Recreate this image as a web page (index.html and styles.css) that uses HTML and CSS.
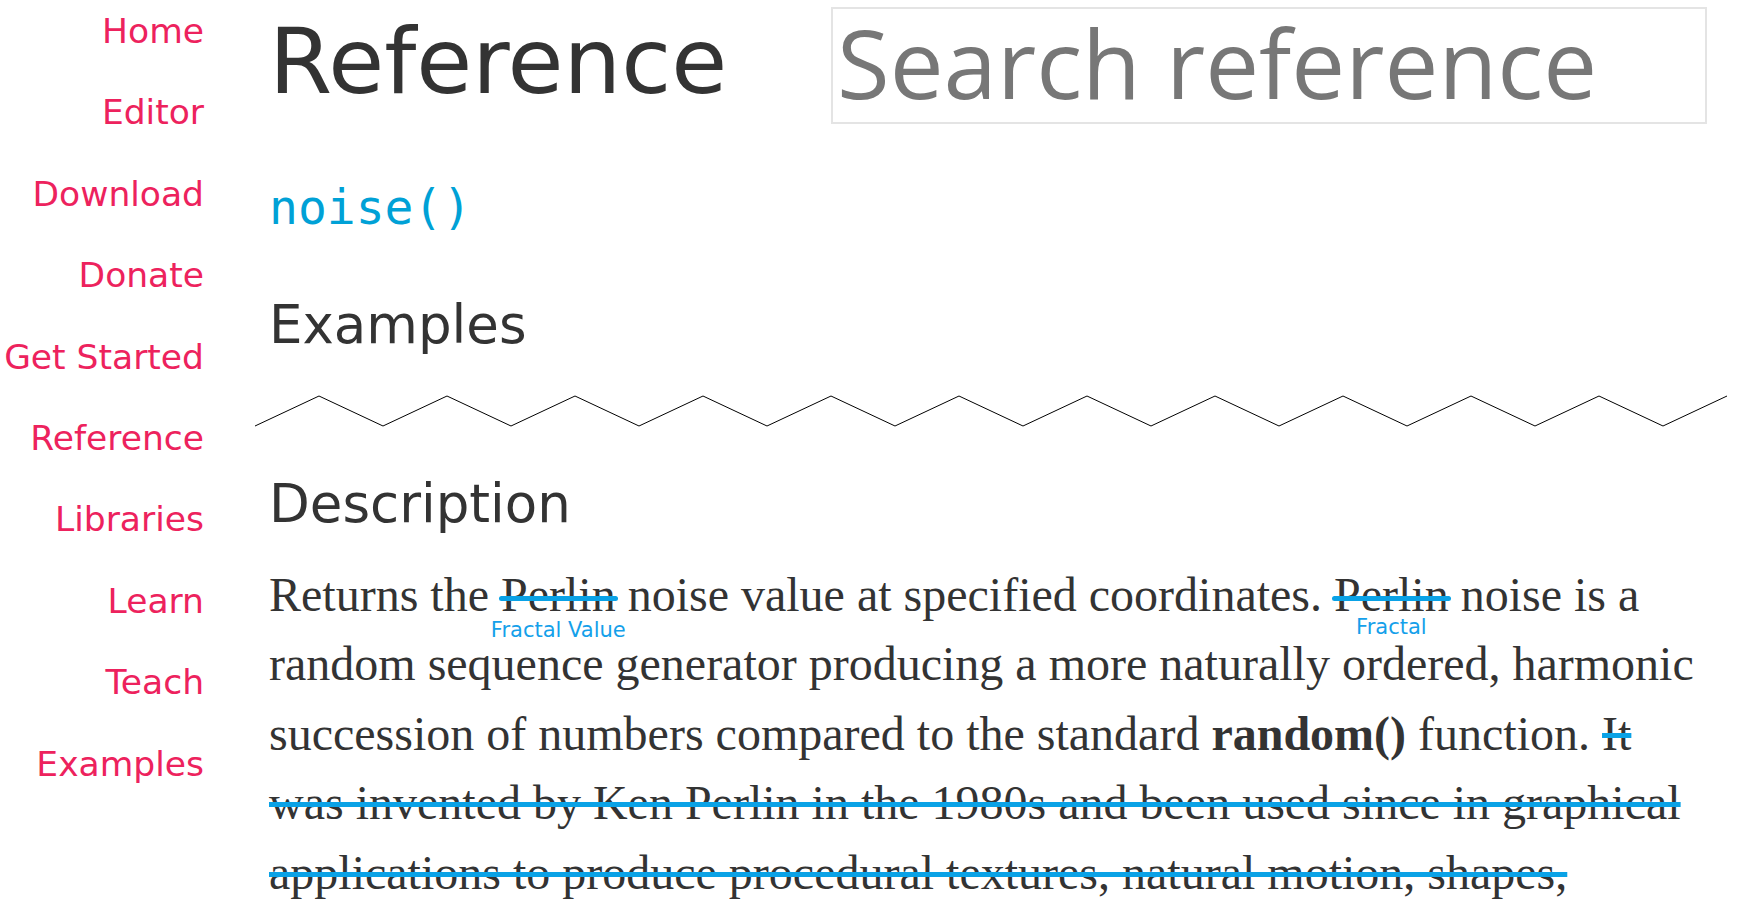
FILE: index.html
```html
<!DOCTYPE html>
<html lang="en">
<head>
<meta charset="utf-8">
<title>noise() | p5.js Reference</title>
<link rel="stylesheet" href="styles.css">
</head>
<body>
<div class="page">
  <nav class="sidebar">
    <a class="nav-link" href="#">Home</a>
    <a class="nav-link" href="#">Editor</a>
    <a class="nav-link" href="#">Download</a>
    <a class="nav-link" href="#">Donate</a>
    <a class="nav-link" href="#">Get Started</a>
    <a class="nav-link" href="#">Reference</a>
    <a class="nav-link" href="#">Libraries</a>
    <a class="nav-link" href="#">Learn</a>
    <a class="nav-link" href="#">Teach</a>
    <a class="nav-link" href="#">Examples</a>
  </nav>
  <main class="content">
    <header class="top">
      <h1 class="title">Reference</h1>
      <input class="search" type="text" placeholder="Search reference">
    </header>
    <h2 class="fn-name">noise()</h2>
    <h3 class="section-title examples-title">Examples</h3>
    <svg class="zigzag" width="1472" height="32" viewBox="0 0 1472 32">
      <polyline fill="none" stroke="#000" stroke-width="1" points="0,31 64,1 128,31 192,1 256,31 320,1 384,31 448,1 512,31 576,1 640,31 704,1 768,31 832,1 896,31 960,1 1024,31 1088,1 1152,31 1216,1 1280,31 1344,1 1408,31 1472,1"/>
    </svg>
    <h3 class="section-title desc-title">Description</h3>
    <p class="desc">Returns the <span class="edit"><span class="struck">Perlin</span><span class="note note-a">Fractal Value</span></span> noise value at specified coordinates. <span class="edit"><span class="struck">Perlin</span><span class="note note-b">Fractal</span></span> noise is a random sequence generator producing a more naturally ordered, harmonic succession of numbers compared to the standard <strong>random()</strong> function. <span class="struck-long">It was invented by Ken Perlin in the 1980s and been used since in graphical applications to produce procedural textures, natural motion, shapes, terrains etc.</span></p>
  </main>
</div>
</body>
</html>
```
FILE: styles.css
```css
html, body {
  margin: 0;
  padding: 0;
  background: #fff;
}

.page {
  display: flex;
  align-items: flex-start;
}

.sidebar {
  width: 204px;
  flex: none;
  display: flex;
  flex-direction: column;
  align-items: flex-end;
  gap: 41.4px;
  padding-top: 11px;
}

.nav-link {
  font-family: "DejaVu Sans", sans-serif;
  font-size: 34.5px;
  line-height: 40px;
  color: #ed225d;
  text-decoration: none;
  white-space: nowrap;
}

.content {
  width: 1438px;
  margin-left: 65px;
  flex: none;
}

.top {
  display: flex;
  align-items: flex-start;
  justify-content: space-between;
}

.title {
  margin: 8.6px 0 0 0;
  font-family: "DejaVu Sans", sans-serif;
  font-weight: 400;
  font-size: 91px;
  line-height: normal;
  color: #333;
}

.search {
  margin: 7px 0 0 0;
  width: 876px;
  height: 117px;
  box-sizing: border-box;
  border: 2px solid #e4e4e4;
  border-radius: 0;
  padding: 0 0 9px 4px;
  font-family: "Open Sans", sans-serif;
  font-size: 96px;
  color: #333;
  outline: none;
  background: #fff;
}

.search::placeholder {
  color: #777;
  opacity: 1;
}

.fn-name {
  margin: 54.5px 0 0 0;
  font-family: "DejaVu Sans Mono", monospace;
  font-weight: 400;
  font-size: 48px;
  line-height: normal;
  color: #00a1d6;
}

.section-title {
  margin: 0;
  font-family: "DejaVu Sans", sans-serif;
  font-weight: 400;
  font-size: 53px;
  line-height: normal;
  color: #333;
}

.examples-title {
  margin-top: 59.4px;
}

.zigzag {
  display: block;
  margin: 40.5px 0 0 -14px;
  overflow: visible;
}

.desc-title {
  margin-top: 45.8px;
}

.desc {
  margin: 25.5px 0 0 0;
  font-family: "Liberation Serif", serif;
  font-size: 48px;
  line-height: 69.5px;
  color: #333;
}

.desc strong {
  font-weight: 700;
}

.edit {
  position: relative;
}

.struck {
  position: relative;
}

.struck::after {
  content: "";
  position: absolute;
  left: -2px;
  right: -2px;
  top: 28.5px;
  height: 5px;
  border-radius: 3px;
  background: #0aa2e6;
}

.note {
  position: absolute;
  left: 50%;
  transform: translateX(-50%);
  font-family: "DejaVu Sans", sans-serif;
  font-size: 21px;
  line-height: normal;
  color: #14a0ea;
  white-space: nowrap;
}

.note-a {
  top: 50.8px;
}

.note-b {
  top: 47.5px;
}

.struck-long {
  text-decoration-line: line-through;
  text-decoration-color: #0aa2e6;
  text-decoration-thickness: 5px;
  text-decoration-skip-ink: none;
}
```
